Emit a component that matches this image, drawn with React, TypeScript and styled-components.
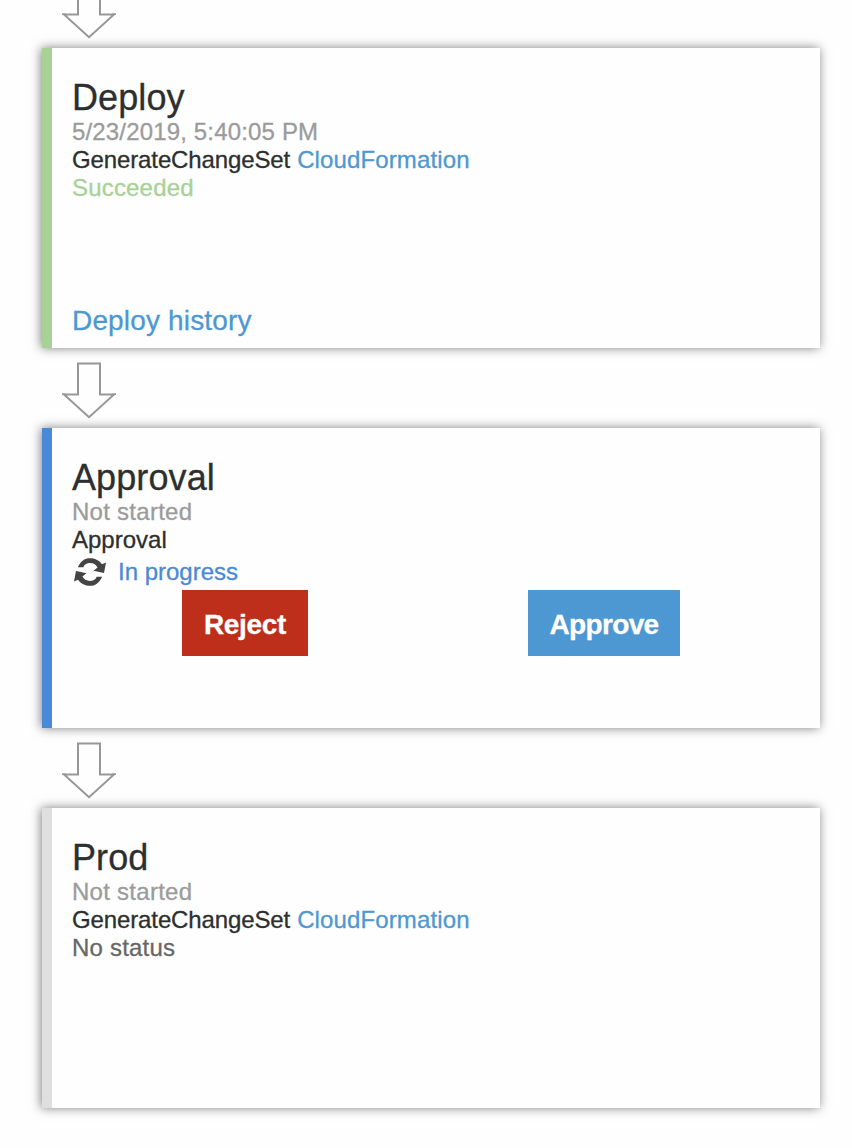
import React from "react";
import styled, { createGlobalStyle } from "styled-components";

const GlobalStyle = createGlobalStyle`
  *, *::before, *::after { box-sizing: border-box; }
  body {
    margin: 0;
    background: #fefefe;
    color: #2d2f2f;
    font-family: "Liberation Sans", Arial, sans-serif;
    -webkit-text-stroke: 0.3px currentColor;
    overflow: hidden;
  }
`;

const Pipeline = styled.main`
  display: flex;
  flex-direction: column;
  width: 852px;
  height: 1148px;
  padding: 0 32px 0 42px;
`;

const Connector = styled.div<{ $height?: number }>`
  display: flex;
  flex: none;
  align-items: flex-end;
  height: ${(p) => p.$height ?? 80}px;
  padding: 0 0 9px 20px;
  overflow: hidden;

  svg { display: block; flex: none; }
`;

const Stage = styled.section<{ $accent: string }>`
  display: flex;
  flex: none;
  flex-direction: column;
  height: 300px;
  padding: 30px 20px 11px;
  border-left: 10px solid ${(p) => p.$accent};
  background: #fefefe;
  box-shadow: -1px 0 10px rgba(0, 0, 0, 0.5);
`;

const Title = styled.h2`
  margin: 0;
  font-size: 36px;
  font-weight: 400;
  line-height: 40px;
  letter-spacing: 0.1px;
`;

const Line = styled.div<{ $color?: string; $tracking?: number }>`
  display: flex;
  gap: 7px;
  color: ${(p) => p.$color ?? "#2d2f2f"};
  font-size: 24px;
  line-height: 28px;
  letter-spacing: ${(p) => p.$tracking ?? 0}px;
  white-space: nowrap;
`;

const ProviderLink = styled.a`
  color: #4d98d2;
  letter-spacing: 0.13px;
`;

const HistoryLink = styled.a`
  margin-top: auto;
  color: #4d98d2;
  font-size: 28px;
  line-height: 32px;
  letter-spacing: 0.16px;
`;

const Progress = styled(Line)`
  align-items: center;
  gap: 12px;
  height: 36px;
  padding-left: 2px;
`;

const Actions = styled.div`
  display: flex;
  justify-content: space-between;
  padding: 0 120px 0 110px;
`;

const ActionButton = styled.button<{ $fill: string; $width: number; $tracking: number }>`
  width: ${(p) => p.$width}px;
  height: 66px;
  padding: 3px 0 0;
  border: 0;
  background: ${(p) => p.$fill};
  color: #fff;
  font: 700 28px/32px "Liberation Sans", Arial, sans-serif;
  letter-spacing: ${(p) => p.$tracking}px;
`;

const DownArrow = () => (
  <svg width="54" height="57" viewBox="0 0 54 57" fill="none" stroke="#979797" strokeWidth="2">
    <path d="M16 1.4H38V32.4H52L27 55.2L2 32.4H16Z" />
    <path d="M0 32.2H4M50 32.2H54" strokeWidth="1.6" />
  </svg>
);

const RefreshIcon = () => (
  <svg width="32" height="28" viewBox="0 0 32 28" fill="#444">
    <path d="M3.8 9.3C7 2.5 11 .2 16 .2C20.5 .2 25 2 28 6.2L32 4.5L30 15L19.5 12.7L23.6 9.4C21.8 6.5 19.5 5 16 5C13 5 10.5 6.2 9.3 9.3Z" />
    <path
      transform="rotate(180 16 14)"
      d="M3.8 9.3C7 2.5 11 .2 16 .2C20.5 .2 25 2 28 6.2L32 4.5L30 15L19.5 12.7L23.6 9.4C21.8 6.5 19.5 5 16 5C13 5 10.5 6.2 9.3 9.3Z"
    />
  </svg>
);

const ChangeSetAction = () => (
  <Line $tracking={-0.12}>
    <span>GenerateChangeSet</span>
    <ProviderLink>CloudFormation</ProviderLink>
  </Line>
);

export default function App() {
  return (
    <>
      <GlobalStyle />
      <Pipeline>
        <Connector $height={48}><DownArrow /></Connector>
        <Stage $accent="#a7d196">
          <Title>Deploy</Title>
          <Line $color="#9b9b9b" $tracking={0.16}>5/23/2019, 5:40:05 PM</Line>
          <ChangeSetAction />
          <Line $color="#a7d196" $tracking={0.18}>Succeeded</Line>
          <HistoryLink>Deploy history</HistoryLink>
        </Stage>
        <Connector><DownArrow /></Connector>
        <Stage $accent="#4a89d9">
          <Title>Approval</Title>
          <Line $color="#9b9b9b" $tracking={0.27}>Not started</Line>
          <Line>Approval</Line>
          <Progress $color="#4a89d9">
            <RefreshIcon />
            <span>In progress</span>
          </Progress>
          <Actions>
            <ActionButton $fill="#bd2f1b" $width={126} $tracking={-0.3}>Reject</ActionButton>
            <ActionButton $fill="#4d98d2" $width={152} $tracking={-0.65}>Approve</ActionButton>
          </Actions>
        </Stage>
        <Connector><DownArrow /></Connector>
        <Stage $accent="#dfdfdf">
          <Title>Prod</Title>
          <Line $color="#9b9b9b" $tracking={0.27}>Not started</Line>
          <ChangeSetAction />
          <Line $color="#666" $tracking={0.2}>No status</Line>
        </Stage>
      </Pipeline>
    </>
  );
}
